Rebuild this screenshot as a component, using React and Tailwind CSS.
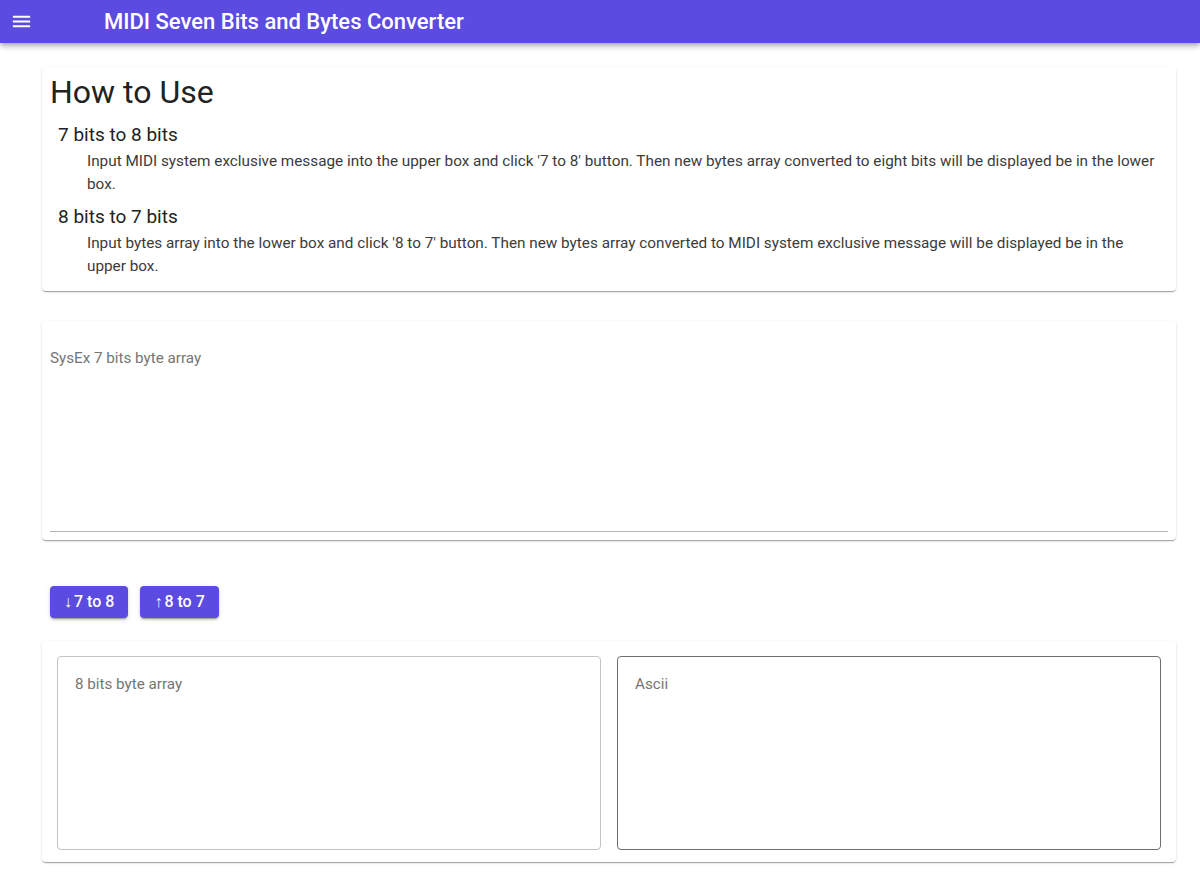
const card =
  'rounded-[4px] bg-white shadow-[0_2px_1px_-1px_rgba(0,0,0,0.2),0_1px_1px_0_rgba(0,0,0,0.14),0_1px_3px_0_rgba(0,0,0,0.12)]'

function MenuIcon() {
  return (
    <svg viewBox="0 0 24 24" width="23" height="23" fill="white" className="ml-[10px]">
      <path d="M3 18h18v-2H3v2zm0-5h18v-2H3v2zm0-7v2h18V6H3z" />
    </svg>
  )
}

function Section({ title, children }) {
  return (
    <div className="mt-[7px] pl-[8px]">
      <h6 className="text-[19px] leading-[28px] text-[#222]">{title}</h6>
      <p className="mt-[1px] pl-[29px] pr-[12px] text-[15.3px] leading-[23px] text-[#3b3b3b]">
        {children}
      </p>
    </div>
  )
}

function Btn({ arrow, label }) {
  return (
    <button className="flex h-[32px] items-center rounded-[4px] bg-[#5b4be1] px-[14px] text-[16px] font-medium text-white shadow-[0_3px_1px_-2px_rgba(0,0,0,0.2),0_2px_2px_0_rgba(0,0,0,0.14),0_1px_5px_0_rgba(0,0,0,0.12)]">
      <span className="mr-[2px]">{arrow}</span>
      {label}
    </button>
  )
}

export default function App() {
  return (
    <div className="min-h-[881px] bg-white font-['Roboto',sans-serif]">
      <header className="flex h-[43px] items-center bg-[#5b4be1] shadow-[0_2px_4px_-1px_rgba(0,0,0,0.2),0_4px_5px_0_rgba(0,0,0,0.14),0_1px_10px_0_rgba(0,0,0,0.12)]">
        <MenuIcon />
        <h1 className="ml-[71px] text-[22px] font-medium text-white">
          MIDI Seven Bits and Bytes Converter
        </h1>
      </header>

      <main className="pl-[42px] pr-[24px] pt-[24px]">
        <div className={`${card} px-[8px] pt-[3px] pb-[13px]`}>
          <h2 className="text-[32px] leading-[44px] text-[#222]">How to Use</h2>
          <Section title="7 bits to 8 bits">
            Input MIDI system exclusive message into the upper box and click '7 to 8' button. Then
            new bytes array converted to eight bits will be displayed be in the lower box.
          </Section>
          <Section title="8 bits to 7 bits">
            Input bytes array into the lower box and click '8 to 7' button. Then new bytes array
            converted to MIDI system exclusive message will be displayed be in the upper box.
          </Section>
        </div>

        <div className={`${card} mt-[30px] px-[8px] pb-[8px]`}>
          <div className="flex h-[211px] flex-col border-b border-[#b5b5b5] pt-[26px]">
            <span className="text-[15.2px] text-[#757575]">SysEx 7 bits byte array</span>
          </div>
        </div>

        <div className="mt-[46px] flex gap-[12px] pl-[8px]">
          <Btn arrow="↓" label="7 to 8" />
          <Btn arrow="↑" label="8 to 7" />
        </div>

        <div className={`${card} mt-[23px] grid grid-cols-2 gap-[16px] p-[15px] pb-[12px]`}>
          <div className="h-[194px] rounded-[4px] border border-[#c4c4c4] px-[17px] pt-[15px]">
            <span className="text-[15.2px] text-[#757575]">8 bits byte array</span>
          </div>
          <div className="h-[194px] rounded-[4px] border border-[#6f6f6f] px-[17px] pt-[15px]">
            <span className="text-[15.2px] text-[#757575]">Ascii</span>
          </div>
        </div>
      </main>
    </div>
  )
}
